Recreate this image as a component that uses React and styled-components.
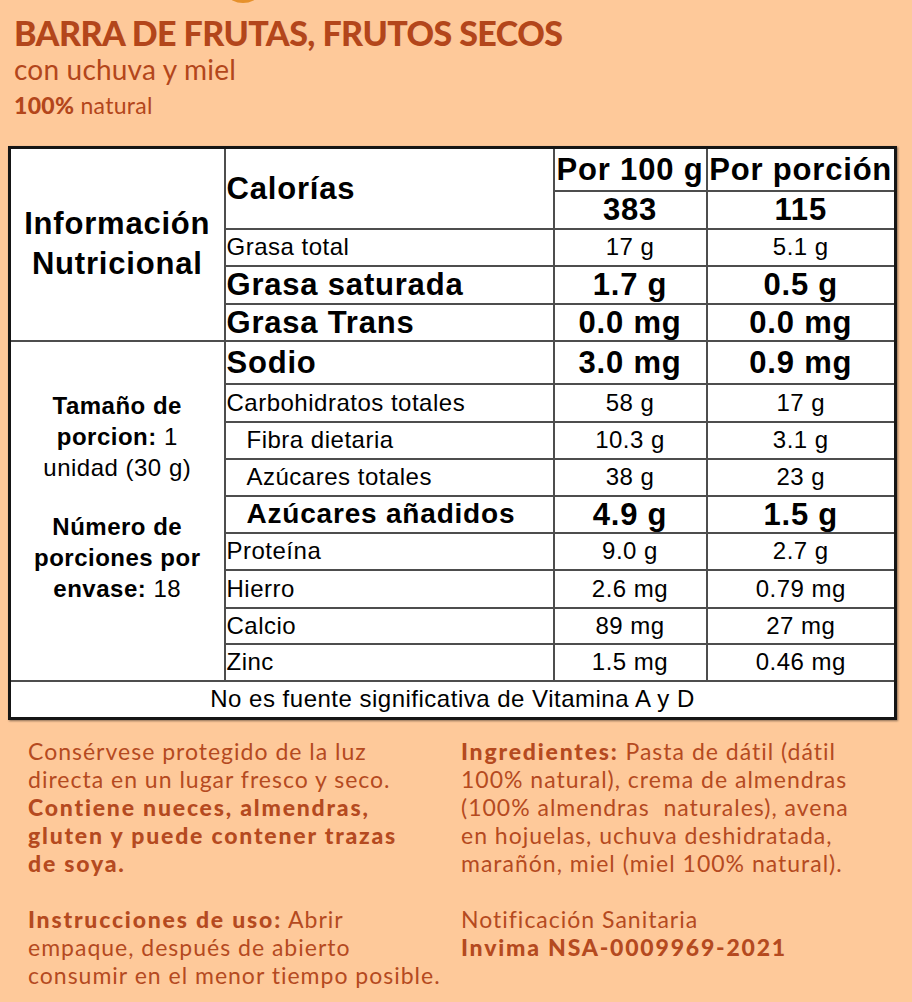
import React from "react";
import styled, { createGlobalStyle } from "styled-components";

const GlobalStyle = createGlobalStyle`
	html, body {
		margin: 0;
		padding: 0;
		background: #fec99a;
	}
`;

const Page = styled.div`
	position: relative;
	width: 912px;
	height: 1002px;
	background: #fec99a;
	overflow: hidden;
	color: #b3461b;
	font-family: Lato, "Open Sans", sans-serif;
`;

// bit of the product picture peeking in at the top
const Crumb = styled.span`
	position: absolute;
	left: 229px;
	top: -12px;
	width: 28px;
	height: 15px;
	border-radius: 50%;
	background: #e6912c;
`;

const Header = styled.header`
	padding: 13px 0 0 14px;
	height: 132px;
	box-sizing: border-box;
`;

const Title = styled.h1`
	margin: 0;
	font-family: Lato, sans-serif;
	font-weight: 900;
	font-size: 34px;
	line-height: 40px;
	letter-spacing: -0.55px;
	color: #b3461b;
`;

const Subtitle = styled.p`
	margin: 0;
	font-weight: 400;
	font-size: 28px;
	line-height: 32px;
	letter-spacing: 0.2px;
`;

const Natural = styled.p`
	margin: 6px 0 0;
	font-size: 23px;
	line-height: 28px;
	letter-spacing: 0.3px;

	b {
		font-weight: 900;
	}
`;

const Table = styled.table`
	margin: 14px 0 0 8px;
	width: 886px;
	border-collapse: collapse;
	table-layout: fixed;
	background: #fff;
	border: 3px solid #151515;
	box-shadow: 1px 1px 2px rgba(0, 0, 0, 0.45);
	font-family: "Liberation Sans", Arial, sans-serif;
	color: #000;
`;

const Cell = styled.td`
	border: 2px solid #4d4d4d;
	padding: 0 0 0 ${(p) => (p.$indent ? "21px" : "1px")};
	height: ${(p) => p.$h || 37}px;
	box-sizing: border-box;
	font-size: ${(p) => p.$size || (p.$bold ? 31 : 24)}px;
	font-weight: ${(p) => (p.$bold ? 700 : 400)};
	letter-spacing: ${(p) => (p.$bold ? 0.8 : 0.5)}px;
	line-height: 1;
	white-space: nowrap;
	vertical-align: middle;
`;

const Value = styled(Cell)`
	text-align: center;
	padding: 0;
`;

const SideCell = styled.td`
	border: 2px solid #4d4d4d;
	text-align: center;
	vertical-align: middle;
	padding: ${(p) => p.$pad || "0"};
`;

const SideTitle = styled.div`
	font-size: 31px;
	font-weight: 700;
	letter-spacing: 0.8px;
	line-height: 40px;
`;

const SideText = styled.p`
	margin: 0 0 28px;
	font-size: 24px;
	line-height: 31px;
	letter-spacing: 0.5px;

	&:last-child {
		margin-bottom: 0;
	}
`;

const Footer = styled.td`
	border: 2px solid #4d4d4d;
	height: 33px;
	text-align: center;
	font-size: 24px;
	letter-spacing: 0.5px;
`;

const Notes = styled.section`
	display: grid;
	grid-template-columns: 433px 1fr;
	padding: 17px 0 0 28px;
`;

const Column = styled.div`
	font-size: 23px;
	line-height: 28px;
	letter-spacing: 1px;
	color: #b54a1f;

	b {
		font-weight: 900;
		letter-spacing: 1.8px;
	}
`;

const Para = styled.p`
	margin: 0 0 28px;
`;

const rows = [
	{ label: "Grasa total", a: "17 g", b: "5.1 g" },
	{ label: "Grasa saturada", a: "1.7 g", b: "0.5 g", bold: true, h: 38 },
	{ label: "Grasa Trans", a: "0.0 mg", b: "0.0 mg", bold: true },
];

const rows2 = [
	{ label: "Carbohidratos totales", a: "58 g", b: "17 g", h: 38 },
	{ label: "Fibra dietaria", a: "10.3 g", b: "3.1 g", indent: true },
	{ label: "Azúcares totales", a: "38 g", b: "23 g", indent: true },
	{ label: "Azúcares añadidos", a: "4.9 g", b: "1.5 g", indent: true, bold: true, size: 28 },
	{ label: "Proteína", a: "9.0 g", b: "2.7 g" },
	{ label: "Hierro", a: "2.6 mg", b: "0.79 mg", h: 38 },
	{ label: "Calcio", a: "89 mg", b: "27 mg", h: 36 },
	{ label: "Zinc", a: "1.5 mg", b: "0.46 mg" },
];

const Row = ({ r }) => (
	<>
		<Cell $bold={r.bold} $indent={r.indent} $h={r.h} $size={r.size}>
			{r.label}
		</Cell>
		<Value $bold={r.bold} $h={r.h}>{r.a}</Value>
		<Value $bold={r.bold} $h={r.h}>{r.b}</Value>
	</>
);

const App = () => {
	return (
		<Page>
			<GlobalStyle />
			<Crumb />
			<Header>
				<Title>BARRA DE FRUTAS, FRUTOS SECOS</Title>
				<Subtitle>con uchuva y miel</Subtitle>
				<Natural>
					<b>100%</b> natural
				</Natural>
			</Header>

			<Table>
				<colgroup>
					<col style={{ width: 215 }} />
					<col style={{ width: 329 }} />
					<col style={{ width: 153 }} />
					<col style={{ width: 189 }} />
				</colgroup>
				<tbody>
					<tr>
						<SideCell rowSpan={5}>
							<SideTitle>
								Información
								<br />
								Nutricional
							</SideTitle>
						</SideCell>
						<Cell $bold $h={43} rowSpan={2}>
							Calorías
						</Cell>
						<Value $bold $h={43}>Por 100 g</Value>
						<Value $bold $h={43}>Por porción</Value>
					</tr>
					<tr>
						<Value $bold $h={38}>383</Value>
						<Value $bold $h={38}>115</Value>
					</tr>
					{rows.map((r) => (
						<tr key={r.label}>
							<Row r={r} />
						</tr>
					))}
					<tr>
						<SideCell rowSpan={9} $pad="0 0 28px">
							<SideText>
								<b>Tamaño de</b>
								<br />
								<b>porcion:</b> 1
								<br />
								unidad (30 g)
							</SideText>
							<SideText>
								<b>Número de</b>
								<br />
								<b>porciones por</b>
								<br />
								<b>envase:</b> 18
							</SideText>
						</SideCell>
						<Row r={{ label: "Sodio", a: "3.0 mg", b: "0.9 mg", bold: true, h: 43 }} />
					</tr>
					{rows2.map((r) => (
						<tr key={r.label}>
							<Row r={r} />
						</tr>
					))}
					<tr>
						<Footer colSpan={4}>No es fuente significativa de Vitamina A y D</Footer>
					</tr>
				</tbody>
			</Table>

			<Notes>
				<Column>
					<Para>
						Consérvese protegido de la luz
						<br />
						directa en un lugar fresco y seco.
						<br />
						<b>
							Contiene nueces, almendras,
							<br />
							gluten y puede contener trazas
							<br />
							de soya.
						</b>
					</Para>
					<Para>
						<b>Instrucciones de uso:</b> Abrir
						<br />
						empaque, después de abierto
						<br />
						consumir en el menor tiempo posible.
					</Para>
				</Column>
				<Column>
					<Para>
						<b>Ingredientes:</b> Pasta de dátil (dátil
						<br />
						100% natural), crema de almendras
						<br />
						(100% almendras&nbsp; naturales), avena
						<br />
						en hojuelas, uchuva deshidratada,
						<br />
						marañón, miel (miel 100% natural).
					</Para>
					<Para>
						Notificación Sanitaria
						<br />
						<b>Invima NSA-0009969-2021</b>
					</Para>
				</Column>
			</Notes>
		</Page>
	);
};

export default App;
